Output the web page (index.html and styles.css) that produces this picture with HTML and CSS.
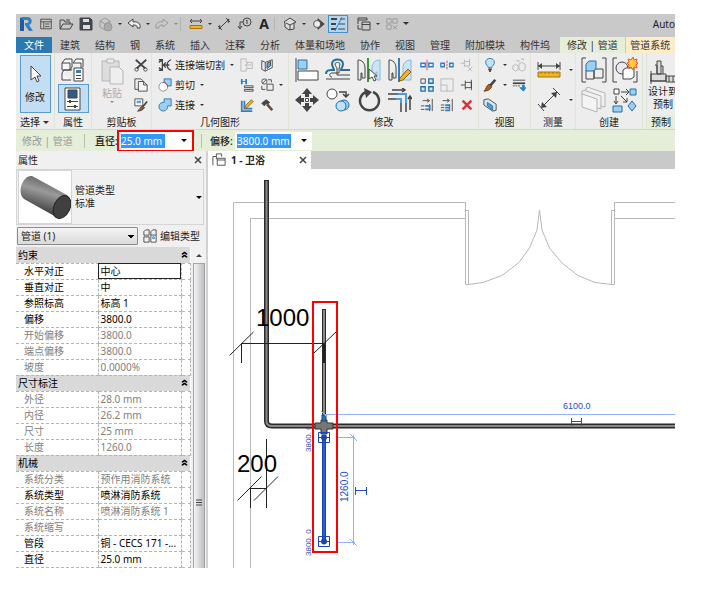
FILE: index.html
```html
<!DOCTYPE html>
<html lang="zh-CN">
<head>
    <meta charset="UTF-8">
    <meta name="viewport" content="width=device-width, initial-scale=1.0">
    <title>Autodesk Revit</title>
    <link rel="stylesheet" href="styles.css">
</head>
<body>

<div class="app">

    <!-- quick access -->
    <header class="titlebar">
        <button class="qa" aria-label="Revit"><svg width="16" height="16" viewBox="0 0 16 16"><path d="M2 2l4-1v14H2z" fill="#1b5d9e" stroke="none"/><path d="M4 1h5c6 0 6 7 2 8l4 6h-4L7 9V7h2c2 0 2-3 0-3H4z" fill="#2f80c4" stroke="none"/></svg></button>
        <button class="qa" aria-label="主视图"><svg width="14" height="14" viewBox="0 0 16 16"><path d="M2 2.500h12v11H2zM2 5.500h12M5.500 6v7M7 8h5M7 11h5"/></svg></button>
        <button class="qa" aria-label="打开"><svg width="16" height="16" viewBox="0 0 16 16"><path d="M2 13V4h4l1 2h5v2M2 13l3-5h10l-3 5zM8 4h4"/></svg></button>
        <button class="qa" aria-label="保存"><svg width="16" height="16" viewBox="0 0 16 16"><path d="M2 2h10l2 2v10H2z" fill="#41474f"/><path d="M5 3h6v3H5zM5 9h7v4H5z" fill="#ddd" stroke="none"/></svg></button>
        <button class="qa" aria-label="同步"><svg class="dim" width="16" height="16" viewBox="0 0 16 16"><path d="M2 5l5-3 5 3v6l-5 3-5-3zM2 5l5 3 5-3M7 8v6" stroke="#999"/><circle cx="10" cy="11" r="4" fill="#aaa" stroke="#999"/></svg></button>
        <span class="arrow"></span>
        <button class="qa" aria-label="撤销"><svg width="16" height="16" viewBox="0 0 16 16"><path d="M2 7l5-4v3c5-1 8 2 7 6h-3c1-2-1-3-4-3v2z" fill="#eee"/></svg></button>
        <span class="arrow"></span>
        <button class="qa" aria-label="重做"><svg class="dim" width="16" height="16" viewBox="0 0 16 16"><path d="M14 7L9 3v3C4 5 1 8 2 12h3c-1-2 1-3 4-3v2z" stroke="#999"/></svg></button>
        <span class="arrow dim"></span>
        <span class="sep"></span>
        <button class="qa" aria-label="测量"><svg width="16" height="16" viewBox="0 0 16 16"><path d="M2 5h12M4 3L2 5l2 2M12 3l2 2-2 2"/><path d="M2 9.500h12v3H2z" fill="#f0b429" stroke="#a87400"/></svg></button>
        <span class="arrow"></span>
        <button class="qa" aria-label="对齐尺寸标注"><svg width="16" height="16" viewBox="0 0 16 16"><path d="M3 13L13 3M2 10l4 4M10 2l4 4M3 13l1-4M13 3l-1 4"/></svg></button>
        <button class="qa" aria-label="按类别标记"><svg width="16" height="16" viewBox="0 0 16 16"><circle cx="11" cy="6" r="4"/><path d="M7 6H4v6M2 10l2 3 2-3M10 5l1-1v4"/></svg></button>
        <button class="qa letter" aria-label="文字">A</button>
        <span class="sep"></span>
        <button class="qa" aria-label="默认三维视图"><svg width="16" height="16" viewBox="0 0 16 16"><path d="M2 6l6-4 6 4-2 1v6l-5 1-4-3V7z" fill="#ddd"/><path d="M4 7l4 2 4-2M8 9v5"/></svg></button>
        <span class="arrow"></span>
        <button class="qa" aria-label="剖面"><svg width="14" height="14" viewBox="0 0 16 16"><path d="M8 2l7 6-7 6z" fill="#444"/><circle cx="7" cy="8" r="4" fill="#eee"/></svg></button>
        <button class="qa on" aria-label="细线"><svg width="16" height="16" viewBox="0 0 16 16"><path d="M1 3h6M1 8h5M1 13h5" stroke-width="2"/><path d="M10 3h5M9 8h6M8 13h7"/><path d="M12 1L5 15" stroke="#2f80c4"/></svg></button>
        <span class="sep"></span>
        <button class="qa" aria-label="切换窗口"><svg width="16" height="16" viewBox="0 0 16 16"><path d="M2 8V2h9v2M2 4h9M6 6h8v8H6zM6 8.500h8M2 9v4h3"/></svg></button>
        <span class="arrow"></span>
        <button class="qa" aria-label="关闭隐藏窗口"><svg class="dim" width="14" height="14" viewBox="0 0 16 16"><path d="M2 2h5v5H2zM9 2h5v5H9zM2 9h5v5H2zM9 10l5 4M14 10l-5 4" stroke="#999"/></svg></button>
        <span class="arrow line"></span>
        <span class="caption">Auto</span>
    </header>

    <nav class="tabs">
        <button class="tab file">文件</button>
        <button class="tab">建筑</button>
        <button class="tab">结构</button>
        <button class="tab">钢</button>
        <button class="tab">系统</button>
        <button class="tab">插入</button>
        <button class="tab">注释</button>
        <button class="tab">分析</button>
        <button class="tab">体量和场地</button>
        <button class="tab">协作</button>
        <button class="tab">视图</button>
        <button class="tab">管理</button>
        <button class="tab">附加模块</button>
        <button class="tab">构件坞</button>
        <button class="tab active">修改 | 管道</button>
        <button class="tab context">管道系统</button>
    </nav>

    <!-- ribbon -->
    <div class="ribbon">
        <section class="panel select">
            <div class="tools">
                <button class="modify"><svg width="16" height="20" viewBox="0 0 16 20"><path d="M4 2v14l4-3 2 5 2-1-2-5h4z" fill="#fff"/></svg>修改</button>
            </div>
            <h2>选择 <span class="arrow"></span></h2>
        </section>

        <section class="panel props">
            <div class="tools big">
                <button aria-label="类型属性"><svg width="26" height="26" viewBox="0 0 26 26"><path d="M2 6l3-4h7v8l-2 3H2zM2 6h8v7M13 6l3-4h7v8M13 6h8v5M2 16l2-3h8M2 16v7h9" fill="#f7f7f7"/><path d="M14 11h9v13h-9z" fill="#fff"/><path d="M16 13h5v3h-5z" fill="#3f7ab0" stroke="none"/><path d="M16 18.500h5M16 21.500h5"/></svg></button>
                <button class="on" aria-label="属性"><svg width="24" height="24" viewBox="0 0 24 24"><path d="M4 1h15v22H4z" fill="#fff"/><path d="M7 3h9v8H7z" fill="#2e5c88"/><path d="M6 14.500h11M6 19.500h11"/><path d="M9 13v3M14 18v3" stroke-width="2"/></svg></button>
            </div>
            <h2>属性</h2>
        </section>

        <section class="panel clip">
            <div class="tools">
                <button class="paste" disabled><svg class="dim" width="24" height="28" viewBox="0 0 24 28"><path d="M2 4h17v20H2z" fill="#ddd"/><path d="M7 2h7v4H7zM10 10h9l4 4v13H10z" fill="#eee"/></svg>粘贴<span class="arrow dim"></span></button>
                <div class="col">
                    <button aria-label="剪切"><svg width="14" height="14" viewBox="0 0 16 16"><path d="M2 2l11 10M14 2L3 12" stroke-width="2"/><circle cx="3" cy="13" r="2"/><circle cx="13" cy="13" r="2"/></svg></button>
                    <button aria-label="复制"><svg width="14" height="14" viewBox="0 0 16 16"><path d="M1 1h7l2 2v10H1z"/><path d="M5 4h6l4 4v7H5zM11 4v4h4" fill="#f5f5f5"/></svg></button>
                    <button aria-label="匹配类型"><svg width="14" height="14" viewBox="0 0 16 16"><path d="M1 1h9v8H1z" fill="#fff"/><path d="M3 3h5v3H3z" fill="#5ba3da" stroke="none"/><path d="M15 4l-5 6" stroke-width="2"/><path d="M10 9l2 2c-2 3-5 4-8 4 2-1 3-5 6-6z" fill="#9a5a26"/></svg></button>
                </div>
            </div>
            <h2>剪贴板</h2>
        </section>

        <section class="panel geometry">
            <div class="tools">
                <div class="col list">
                    <button><svg width="14" height="14" viewBox="0 0 16 16"><path d="M1 2h4v12H1M5 2L1 5M5 14l-4-3M15 2c-6 2-6 10 0 12" stroke-width="1.500"/><path d="M6 8h7M9 5L6 8l3 3" stroke-width="1.500"/></svg>连接端切割<span class="arrow"></span></button>
                    <button><svg width="14" height="14" viewBox="0 0 16 16"><path d="M7 1h8v8H7z" fill="#9bd0f5" stroke="#26709f"/><circle cx="6" cy="10" r="5" fill="#fff" stroke="#888"/><path d="M6 5a5 5 0 0 1 5 5" stroke="#d22"/></svg>剪切<span class="arrow"></span></button>
                    <button><svg width="14" height="14" viewBox="0 0 16 16"><path d="M7 1h8v8h-4a5 5 0 1 1-4-4z" fill="#9bd0f5" stroke="#26709f"/></svg>连接<span class="arrow"></span></button>
                </div>
                <div class="col">
                    <button aria-label="连接屋顶"><svg class="dim" width="14" height="14" viewBox="0 0 16 16"><path d="M1 1h6v4h7v7H7v3H1zM13 8H6M9 6L6 8l3 3"/></svg></button>
                    <button aria-label="梁连接"><svg width="14" height="14" viewBox="0 0 16 16"><path d="M2 1v6M7 1v6" stroke="#2f80c4" stroke-width="2"/><path d="M2 4h5" stroke="#2f80c4"/><path d="M5 9h10v2H5zM5 13h10v2H5z"/></svg></button>
                    <button aria-label="墙连接"><svg width="14" height="14" viewBox="0 0 16 16"><path d="M2 3v12h12M5 3v9h9" stroke="#2f80c4" stroke-width="2"/><path d="M6 9l7-7 2 2-7 7-3 1z" fill="#f0b429" stroke="#8a5a10"/></svg></button>
                </div>
                <div class="col">
                    <button aria-label="拆分面"><svg width="14" height="14" viewBox="0 0 16 16"><path d="M2 3l4 2 8-3v9l-8 4-4-2z" fill="#e8eef4"/><path d="M6 5v10"/><path d="M8 6l4-2v5l-4 3z" fill="#5ba3da"/></svg></button>
                    <button aria-label="取消连接"><svg width="14" height="14" viewBox="0 0 16 16"><circle cx="5" cy="4" r="3"/><path d="M3 6l4-4M8 7h7v7H8zM2 9v4h4M9 2h4v3"/></svg></button>
                    <button aria-label="拆除"><svg width="14" height="14" viewBox="0 0 16 16"><path d="M2 6l5-4 4 3-2 2-2-1-2 3z" fill="#444"/><path d="M8 7l6 7" stroke="#6b4a38" stroke-width="3"/></svg></button>
                </div>
                <span class="arrow"></span>
            </div>
            <h2>几何图形</h2>
        </section>

        <section class="panel edit">
            <div class="tools">
                <div class="large">
                    <button aria-label="对齐"><svg width="24" height="24" viewBox="0 0 24 24"><path d="M1 0v24"/><path d="M3 2h9v9H3z" fill="#9bd0f5" stroke="#26709f"/><path d="M3 13h20v9H3z" fill="#fff"/></svg></button>
                    <button aria-label="偏移"><svg width="26" height="24" viewBox="0 0 26 24"><path d="M1 16c0-5 5-4 8-4 0-2-2-3-2-6 0-6 11-6 11 0 0 3-2 4-2 6h9" stroke="#26709f" stroke-width="2"/><path d="M1 21h24M25 17H12V11c0-2-2-3-2-5 0-2 5-2 5 0 0 2-1 3-1 5v4H7c-3 0-3 4 0 4"/></svg></button>
                    <button aria-label="镜像 - 拾取轴"><svg width="24" height="24" viewBox="0 0 24 24"><path d="M1 2c4 0 7 3 7 8v10H5v-5H4v7H1z" fill="#eee"/><path d="M23 2c-5 0-8 3-8 8v8h4v-4h1v8h3z" fill="#c9e5f8" stroke="#8ab7d6"/><path d="M11 0v24" stroke="#3a9a3a" stroke-width="2"/><path d="M12 11v10l3-2 2 4 2-1-2-4h3z" fill="#fff"/></svg></button>
                    <button aria-label="镜像 - 绘制轴"><svg width="24" height="24" viewBox="0 0 24 24"><path d="M1 2c4 0 7 3 7 8v10H5v-5H4v7H1z" fill="#eee"/><path d="M23 2c-5 0-8 3-8 8v12h8z" fill="#c9e5f8" stroke="#8ab7d6"/><path d="M11 0v24" stroke="#2f80c4" stroke-width="2"/><path d="M12 20l8-9 3 3-8 8-4 1z" fill="#f0b429" stroke="#8a5a10"/></svg></button>
                    <button aria-label="移动"><svg width="24" height="24" viewBox="0 0 24 24"><path d="M12 0l5 6h-3v3h-4V6H7zM12 24l5-6h-3v-3h-4v3H7zM0 12l6-5v3h3v4H6v3zM24 12l-6-5v3h-3v4h3v3z" fill="#444" stroke="none"/><path d="M10.500 10.500h3v3h-3z" fill="#fff"/></svg></button>
                    <button aria-label="复制图元"><svg width="24" height="24" viewBox="0 0 24 24"><circle cx="6" cy="6" r="5" fill="#fff"/><path d="M13 4h7v4M17 6l3 3 3-3" stroke-width="1.500"/><circle cx="18" cy="17" r="5" fill="#9bd0f5" stroke="#26709f"/><circle cx="15" cy="18" r="5" fill="#bfe2fa" stroke="#26709f"/></svg></button>
                    <button aria-label="旋转"><svg width="24" height="24" viewBox="0 0 24 24"><path d="M16 4a9.500 9.500 0 1 1-7 0" stroke-width="2.500"/><path d="M7 0l8 4-6 6z" fill="#444" stroke="none"/></svg></button>
                    <button aria-label="修剪/延伸为角"><svg width="24" height="24" viewBox="0 0 24 24"><path d="M4 2h13M14 0l3 2-3 2M22 22V9M20 11l2-3 2 3M0 6h10M0 11h8M13 15v9M18 15v9" stroke-width="1.500"/><path d="M10 6h8v9M8 11h5v4" stroke="#4a9fe0" stroke-width="2"/></svg></button>
                </div>
                <div class="small">
                    <button aria-label="拆分图元"><svg width="14" height="14" viewBox="0 0 16 16"><path d="M1 6h5v4H1zM10 6h5v4h-5z" stroke="#2f80c4" stroke-width="1.500"/><path d="M8 2v12" stroke="#d33"/></svg></button>
                    <button aria-label="用间隙拆分"><svg width="14" height="14" viewBox="0 0 16 16"><path d="M1 6h4v4H1zM11 6h4v4h-4z" stroke="#2f80c4" stroke-width="1.500"/><path d="M8 3v3M8 7v2M8 10v3" stroke="#d33"/></svg></button>
                    <button aria-label="解锁"><svg class="dim" width="14" height="14" viewBox="0 0 16 16"><path d="M1 6h4M5 2v8M5 4h6v5H5M11 1v7M9 10l5 5M14 10l-5 5"/></svg></button>
                    <button aria-label="阵列"><svg width="14" height="14" viewBox="0 0 16 16"><path d="M1 1h5v5H1z"/><path d="M10 1h5v5h-5zM1 10h5v5H1zM10 10h5v5h-5z" fill="#c9e5f8" stroke="#26709f" stroke-width="1.500"/></svg></button>
                    <button aria-label="缩放"><svg class="dim" width="14" height="14" viewBox="0 0 16 16"><path d="M1 1h14v14H1zM1 8h7v7"/></svg></button>
                    <button aria-label="锁定"><svg width="14" height="14" viewBox="0 0 16 16"><path d="M1 8h5M6 3v10M6 5h7v6H6M13 2v12"/></svg></button>
                    <button aria-label="修剪/延伸单个图元"><svg width="14" height="14" viewBox="0 0 16 16"><path d="M3 3h7M8 1l3 2-3 2M14 1v14M11 7v8M1 9h4M1 13h4"/><path d="M6 9h5v4H6" stroke="#2f80c4" stroke-width="2"/></svg></button>
                    <button aria-label="修剪/延伸多个图元"><svg width="14" height="14" viewBox="0 0 16 16"><path d="M3 3h7M8 1l3 2-3 2M14 1v14M11 7v8M1 8h4M1 11h4M1 14h4"/><path d="M6 8h5M6 11h5M6 14h5" stroke="#2f80c4" stroke-width="2"/></svg></button>
                    <button aria-label="删除"><svg width="14" height="14" viewBox="0 0 16 16"><path d="M3 3l10 10M13 3L3 13" stroke="#d8363c" stroke-width="3"/></svg></button>
                </div>
            </div>
            <h2>修改</h2>
        </section>

        <section class="panel view">
            <div class="tools">
                <div class="col">
                    <button aria-label="隐藏"><svg width="14" height="14" viewBox="0 0 16 16"><path d="M6 11c0-2-3-3-3-6 0-6 10-6 10 0 0 3-3 4-3 6z" fill="#bfe2fa" stroke="#26709f"/><path d="M6 13h4M7 15h2" stroke-width="2"/></svg></button>
                    <button aria-label="替换图形"><svg width="14" height="14" viewBox="0 0 16 16"><path d="M14 2L8 9" stroke-width="3"/><path d="M7 7l3 3c-2 4-6 5-9 5 3-2 2-6 6-8z" fill="#a85f28" stroke="#6b3610"/></svg></button>
                    <button aria-label="选择框"><svg width="14" height="14" viewBox="0 0 16 16"><path d="M1 2l5-1 9 6v7l-4 1-10-7z" fill="#d8e6f0"/><path d="M5 5l6 4v5L5 9z" fill="#4a9fe0" stroke="#26709f"/></svg></button>
                </div>
                <div class="col arrows"><span class="arrow"></span><span class="arrow"></span></div>
                <div class="col">
                    <button aria-label="置换图元"><svg class="dim" width="14" height="14" viewBox="0 0 16 16"><path d="M1 9l3-2 3 2v4l-3 2-3-2zM8 7l3-2 4 2v6l-4 2-3-2zM5 3h3v2M10 1h3v2"/></svg></button>
                    <button aria-label="线处理"><svg width="14" height="14" viewBox="0 0 16 16"><path d="M1 2.500h14"/><path d="M1 6h14" stroke-width="2"/><path d="M1 9h8" stroke-dasharray="2 1"/><path d="M12 8v3H9l4 4 3-4h-2V8z" fill="#2f80c4" stroke="#2f80c4"/></svg></button>
                </div>
            </div>
            <h2>视图</h2>
        </section>

        <section class="panel measure">
            <div class="tools">
                <div class="col two">
                    <button aria-label="测量距离"><svg width="24" height="24" viewBox="0 0 24 24"><path d="M1 4v8M23 4v8M1 8h22"/><path d="M1 8l4-3v6zM23 8l-4-3v6z" fill="#444" stroke="none"/><path d="M1 14h22v5H1z" fill="#f0b429" stroke="#a87400"/><path d="M4 14v2M8 14v2M12 14v2M16 14v2M20 14v2" stroke="#a87400"/></svg></button>
                    <button aria-label="尺寸标注"><svg width="24" height="24" viewBox="0 0 24 24"><path d="M4 20L20 4M1 16l6 7M16 0l7 7"/><path d="M4 20l1-6 5 5zM20 4l-1 6-5-5z" fill="#444" stroke="none"/></svg></button>
                </div>
                <div class="col two arrows"><span class="arrow"></span><span class="arrow"></span></div>
            </div>
            <h2>测量</h2>
        </section>

        <section class="panel create">
            <div class="tools">
                <div class="large">
                    <button aria-label="创建组"><svg width="26" height="26" viewBox="0 0 26 26"><path d="M5 1H1v24h4M21 1h4v24h-4"/><path d="M13 12h9v9h-9zM5 13h8v9H5z" fill="#eee"/><path d="M5 7l3-3h7v8l-3 2H5z" fill="#9bd0f5" stroke="#26709f"/></svg></button>
                    <button aria-label="创建部件"><svg width="26" height="26" viewBox="0 0 26 26"><path d="M5 1H1v24h4M25 14v11h-4"/><circle cx="10" cy="11" r="6" fill="#e6e9ee"/><path d="M11 13l3-2h8v9l-3 2h-8z" fill="#fff"/><path d="M21 0l1 3 3-1-1 3 2 1-2 2 1 3-3-1-1 3-2-3-3 1 1-3-2-2 2-1-1-3 3 1z" fill="#fc4" stroke="#e8601c"/></svg></button>
                    <button aria-label="创建零件"><svg class="dim" width="26" height="26" viewBox="0 0 26 26"><path d="M9 1l15 5v14l-4-1" fill="#f0f0f0"/><path d="M5 4l15 5v13l-4-1" fill="#f0f0f0"/><path d="M1 7l15 5v13L1 20z" fill="#f4f4f4"/><path d="M1 7V4l4-1V4M5 3V1l4-1v1"/></svg></button>
                    <button aria-label="创建类似"><svg width="26" height="26" viewBox="0 0 26 26"><path d="M2 2h5v5H2z" fill="#fff"/><path d="M18 2h6v6h-6zM1 19h9v6H1zM20 14l4 5-4 5-4-5z" fill="#9bd0f5" stroke="#26709f"/><path d="M9 5h7M14 2l3 3-3 3M4 9v7M2 14l2 3 2-3M9 9l6 6M15 11v4h-4"/></svg></button>
                </div>
            </div>
            <h2>创建</h2>
        </section>

        <section class="panel fab">
            <div class="tools">
                <button class="design"><svg width="28" height="26" viewBox="0 0 28 26"><path d="M8 2h4v13H8zM2 15h15v7H2zM17 17h11v6H17zM6 6h2v9M12 7h2v8M1 22h16M2 12v13M20 17v6M24 17v6" fill="#ddd"/></svg>设计到<br>预制</button>
            </div>
            <h2>预制</h2>
        </section>
    </div>

    <!-- options bar -->
    <div class="options">
        <span class="mode">修改 | 管道</span>
        <label for="diameter">直径:</label>
        <div class="combo marked">
            <input class="picked" type="text" id="diameter" value="25.0 mm">
            <button aria-label="展开直径"><span class="arrow"></span></button>
        </div>
        <label class="offset" for="offset">偏移:</label>
        <div class="combo">
            <input class="picked wide" type="text" id="offset" value="3800.0 mm">
            <button aria-label="展开偏移"><span class="arrow"></span></button>
        </div>
    </div>

    <main class="work">
        <aside class="palette">
            <div class="palette-head">属性<button aria-label="关闭属性"><svg width="8" height="8" viewBox="0 0 8 8"><path d="M1 1l6 6M7 1L1 7" stroke-width="1.500"/></svg></button></div>

            <button class="type">
                <span class="thumb"><svg width="52" height="52" viewBox="0 0 52 52">
                    <defs><linearGradient id="steel" x1="0.600" y1="0.100" x2="0.350" y2="0.800"><stop offset="0" stop-color="#666"/><stop offset="0.400" stop-color="#9a9a9a"/><stop offset="1" stop-color="#444"/></linearGradient></defs>
                    <path d="M13 5L48 24c8 8-3 24-9 23L5 28C-3 21 4 4 13 5z" fill="url(#steel)" stroke="none"/>
                    <ellipse cx="43" cy="36" rx="8" ry="12" transform="rotate(25 43 36)" fill="#404040" stroke="#222"/>
                </svg></span>
                <span class="type-name">管道类型<br>标准</span>
                <span class="arrow"></span>
            </button>

            <div class="filter">
                <select aria-label="图元过滤">
                    <option>管道 (1)</option>
                </select>
                <button><svg width="14" height="14" viewBox="0 0 16 16"><path d="M1 3l2-2h4v6H1zM9 3l2-2h4v6M9 7V3M1 9h6v6H1z"/><path d="M9 7h6v8H9z" fill="#fff"/><path d="M11 9h2v2h-2z" stroke="#2f80c4"/></svg>编辑类型</button>
            </div>

            <div class="grid">
                <table>
                    <colgroup><col class="name"><col class="value"><col class="link"></colgroup>
                    <tbody>
                        <tr class="group"><th colspan="2">约束</th><th>«</th></tr>
                        <tr><td>水平对正</td><td class="focus">中心</td><td></td></tr>
                        <tr><td>垂直对正</td><td>中</td><td></td></tr>
                        <tr><td>参照标高</td><td>标高 1</td><td></td></tr>
                        <tr><td>偏移</td><td>3800.0</td><td></td></tr>
                        <tr class="ro"><td>开始偏移</td><td>3800.0</td><td></td></tr>
                        <tr class="ro"><td>端点偏移</td><td>3800.0</td><td></td></tr>
                        <tr class="ro"><td>坡度</td><td>0.0000%</td><td></td></tr>
                        <tr class="group"><th colspan="2">尺寸标注</th><th>«</th></tr>
                        <tr class="ro"><td>外径</td><td>28.0 mm</td><td></td></tr>
                        <tr class="ro"><td>内径</td><td>26.2 mm</td><td></td></tr>
                        <tr class="ro"><td>尺寸</td><td>25 mm</td><td></td></tr>
                        <tr class="ro"><td>长度</td><td>1260.0</td><td></td></tr>
                        <tr class="group"><th colspan="2">机械</th><th>«</th></tr>
                        <tr class="ro"><td>系统分类</td><td>预作用消防系统</td><td></td></tr>
                        <tr><td>系统类型</td><td>喷淋消防系统</td><td></td></tr>
                        <tr class="ro"><td>系统名称</td><td>喷淋消防系统 1</td><td></td></tr>
                        <tr class="ro"><td>系统缩写</td><td></td><td></td></tr>
                        <tr><td>管段</td><td>铜 - CECS 171 -...</td><td></td></tr>
                        <tr><td>直径</td><td>25.0 mm</td><td></td></tr>
                    </tbody>
                </table>
                <div class="scroll">
                    <span class="arrow up"></span>
                    <div class="handle"><svg width="6" height="7" viewBox="0 0 6 7"><path d="M0 1h6M0 3.500h6M0 6h6"/></svg></div>
                </div>
            </div>
        </aside>

        <section class="view-area">
            <div class="view-tabs">
                <div class="view-tab">
                    <svg width="14" height="14" viewBox="0 0 16 16"><path d="M1 14V4h4V1h6v3M5 4v3"/><path d="M6 6h9v8H6zM6 8h9" fill="#fff"/></svg>
                    <b>1 - 卫浴</b>
                    <button aria-label="关闭视图"><svg width="8" height="8" viewBox="0 0 8 8"><path d="M1 1l6 6M7 1L1 7" stroke-width="1.500"/></svg></button>
                </div>
            </div>

            <svg class="plan">
                <!-- walls and double door -->
                <g stroke="#b8b8b8">
                    <path d="M25.500 1200V33.500H257.500V115.500M42.500 1200V49.500H257.500M1600 33.500H406.500V115.500M1600 49.500H406.500"/>
                    <path d="M257.500 41.500h3v74h-3M406.500 41.500h-3v74h3"/>
                    <path d="M260.500 115.500L275 113.500 294 106.500 311 93.500 321.500 79 329 61 331.500 41 334 61 341.500 79 354 94 370 106.500 387 113.500 403.500 115.500"/>
                </g>

                <text class="elev" transform="translate(103 283) rotate(-90)">3800. 0</text>
                <text class="elev" transform="translate(103 387) rotate(-90)">3800. 0</text>

                <!-- pipes -->
                <g stroke="#2b2b2b" stroke-width="5">
                    <path d="M58.500 11V252Q58.500 257 64 257H1600"/>
                    <path d="M116 140V257" stroke-width="4"/>
                </g>
                <g stroke="#8a8a8a" stroke-width="2">
                    <path d="M58.500 12V252Q58.500 257 64 257H1600"/>
                    <path d="M116 141V257"/>
                </g>
                <path d="M113 251h6v3h6v6h-6v5h-6v-5h-6v-6h6z" fill="#777" stroke="#333"/>
                <path d="M114 246h4v6h-4z" fill="#2c6fb0" stroke="#174a80"/>

                <!-- dimensions -->
                <g stroke="#222">
                    <path d="M33 174.500h83M33.500 174v20M21.500 186.500l24-23.500M106 184l22-21"/>
                    <path d="M116 174v20" stroke-width="2"/>
                    <path d="M58.500 270v69M42.500 319v20M42 319.500h16M29.500 331.500l24-24M46 331.500l24-24"/>
                </g>
                <text class="dim-text" x="48" y="157">1000</text>
                <text class="dim-text" x="29" y="303">200</text>

                <g stroke="#8fb4f5">
                    <path d="M116 245.500H1600M128 268.500h19M128 373.500h19M145.500 266v110M142 265l7 7M142 370l7 7M113 242l6 6"/>
                </g>
                <g stroke="#1f4fbf">
                    <path d="M363.500 249v8M373.500 249v8M364 252.500h9M147.500 318v8M158.500 318v8M148 321.500h10"/>
                </g>
                <text class="temp" x="355" y="240">6100.0</text>
                <text class="temp large" transform="translate(140 333) rotate(-90)">1260.0</text>

                <!-- selected pipe -->
                <path d="M116 269v104" stroke="#1746b4" stroke-width="4"/>
                <path d="M116 269v104" stroke="#3f74e6"/>
                <path d="M110.500 263.500h11v10h-11zM110.500 367.500h11v10h-11zM111 268.500h10M111 372.500h10" stroke="#1746b4"/>
                <circle cx="116" cy="268.500" r="3" fill="#1746b4" stroke="none"/>
                <circle cx="116" cy="372.500" r="3" fill="#1746b4" stroke="none"/>
                <rect x="105" y="133" width="24" height="250" stroke="#f00" stroke-width="2"/>
            </svg>
        </section>
    </main>
</div>

</body>
</html>
```
FILE: styles.css
```css
* {
    box-sizing: border-box;
}
body {
    margin: 0;
    padding: 14px 27px 26px 16px;
    background: #fff;
    color: #222;
    font-family: "Noto Sans", "Noto Sans CJK SC", sans-serif;
    font-size: 10px;
    line-height: 14px;
}
button {
    display: flex;
    align-items: center;
    justify-content: center;
    margin: 0;
    padding: 0;
    border: 0;
    background: none;
    color: inherit;
    font: inherit;
    white-space: nowrap;
    cursor: pointer;
}
svg {
    display: block;
    flex: none;
    fill: none;
    stroke: #444;
}
svg.dim {
    stroke: #b5b5b5;
}
.app {
    overflow: hidden;
}
.arrow {
    flex: none;
    width: 8px;
    display: flex;
    justify-content: center;
}
.arrow::before {
    content: "";
    border: 2px solid transparent;
    border-top-color: #333;
    border-bottom: 0;
}
.arrow.dim::before {
    border-top-color: #888;
}

/* title bar */
.titlebar {
    display: flex;
    align-items: center;
    height: 23px;
    padding-bottom: 4px;
    background: #c9c9c9;
}
.qa {
    width: 20px;
    height: 18px;
}
.qa.on {
    border: 1px solid #4a90c8;
    background: #b5d5ee;
}
.qa.letter {
    font: bold 14px "Open Sans", sans-serif;
}
.arrow.line::before {
    border-width: 3px;
    border-bottom: 0;
}
.sep {
    width: 6px;
    height: 14px;
    border-left: 1px solid #b5b5b5;
}
.caption {
    margin-left: auto;
    line-height: 16px;
}

/* tabs */
.tabs {
    display: flex;
    gap: 1px;
    height: 16px;
    background: #c9c9c9;
}
.tab {
    flex: none;
    padding: 0 7px;
    color: #333;
}
.tab.file {
    width: 36px;
    background: #2a79b0;
    color: #fff;
}
.tab.active {
    margin-left: 2px;
    background: #e4eed8;
}
.tab.context {
    flex: 1;
    padding: 0;
    background: #fdecc8;
}

/* ribbon */
.ribbon {
    display: flex;
    height: 77px;
    background: #ededed;
    border-bottom: 1px solid #cfd6c8;
}
.panel {
    flex: none;
    display: flex;
    flex-direction: column;
    border-right: 1px solid #dfe6d8;
}
.panel h2 {
    display: flex;
    align-items: center;
    justify-content: center;
    gap: 2px;
    margin: 0;
    font-size: 10px;
    font-weight: normal;
    line-height: 14px;
}
.tools {
    display: flex;
    height: 62px;
    padding-top: 2px;
}
.panel.select { width: 39px; }
.panel.props { width: 37px; }
.panel.clip { width: 60px; }
.panel.geometry { width: 137px; }
.panel.edit { width: 190px; }
.panel.view { width: 52px; }
.panel.measure { width: 45px; }
.panel.create { width: 67px; }
.panel.select h2 .arrow::before {
    border-width: 3px;
    border-bottom: 0;
}
.modify {
    flex-direction: column;
    gap: 6px;
    width: 31px;
    height: 58px;
    margin: 0 auto;
    border: 1px solid #5b9bd0;
    background: #c3def2;
}
.tools.big {
    flex-direction: column;
    align-items: center;
}
.tools.big button {
    width: 31px;
    height: 29px;
}
.tools.big .on {
    border: 1px solid #5b9bd0;
    background: #c3def2;
}
.paste {
    flex-direction: column;
    justify-content: flex-start;
    width: 40px;
    padding-top: 2px;
    gap: 1px;
    color: #aaa;
}
.col {
    display: grid;
    grid-template-rows: 20px 20px 20px;
    width: 20px;
}
.col.two {
    grid-template-rows: 30px 30px;
    width: 36px;
}
.col.arrows,
.col.two.arrows {
    width: 8px;
    align-items: center;
}
.clip .col {
    width: 18px;
}
.col.list {
    width: 85px;
    padding-left: 6px;
}
.list button {
    justify-content: flex-start;
    gap: 3px;
}
.geometry .tools > .arrow {
    align-items: center;
}
.large {
    display: grid;
    grid-template-columns: repeat(4, 31px);
    grid-template-rows: 30px 30px;
    padding-left: 2px;
}
.create .large {
    grid-template-columns: 31px 31px;
}
.small {
    display: grid;
    grid-template-columns: repeat(3, 20px);
    grid-template-rows: 20px 20px 20px;
    padding-left: 2px;
}
.view .col {
    width: 22px;
}
.view .col.arrows {
    width: 8px;
}
.panel.fab {
    flex: 1;
    min-width: 0;
    margin-left: 3px;
    border-left: 1px solid #dfe6d8;
    border-right: 0;
    overflow: hidden;
}
.panel.fab h2 {
    background: #e4eed8;
}
.design {
    flex-direction: column;
    flex: none;
    width: 32px;
    line-height: 13px;
}

/* options bar */
.options {
    display: flex;
    align-items: center;
    height: 21px;
    background: #e4eed8;
}
.mode {
    width: 69px;
    padding-left: 6px;
    border-right: 1px solid #b9c2b0;
    color: #999;
}
.options label {
    padding-left: 10px;
    width: 32px;
    white-space: nowrap;
    font-weight: 500;
}
.options .offset {
    margin-left: 7px;
    padding-left: 8px;
    width: 34px;
    border-left: 1px solid #b9c2b0;
}
.combo {
    display: flex;
    justify-content: space-between;
    align-items: center;
    width: 77px;
    height: 18px;
    padding: 0 4px 0 2px;
    background: #fff;
}
.combo.marked {
    height: 22px;
    border: 2px solid #f00;
}
.picked {
    width: 44px;
    height: 14px;
    padding: 0;
    border: 0;
    background: #3399ff;
    color: #fff;
    font: inherit;
}
.picked.wide {
    width: 54px;
}
.combo .arrow::before,
.type .arrow::before {
    border-width: 3px;
    border-bottom: 0;
    border-top-color: #000;
}

/* properties palette */
.work {
    display: flex;
}
.palette {
    flex: none;
    width: 192px;
    border-right: 2px solid #d2d2d2;
    background: #f0f0f0;
}
.palette-head {
    display: flex;
    justify-content: space-between;
    align-items: center;
    height: 18px;
    padding: 0 4px 0 2px;
}
.type {
    width: 188px;
    height: 56px;
    padding: 1px 0 1px 1px;
    border: 1px solid #d5d5d5;
}
.thumb {
    border: 1px solid #d5d5d5;
    background: #fff;
}
.type-name {
    flex: 1;
    padding-left: 3px;
    text-align: left;
    line-height: 13px;
}
.filter {
    display: flex;
    align-items: center;
    gap: 5px;
    height: 22px;
    padding-left: 1px;
}
.filter select {
    appearance: none;
    width: 121px;
    height: 18px;
    padding: 0 3px;
    border: 1px solid #8c8c8c;
    border-radius: 1px;
    background:
        linear-gradient(to bottom left, #000 50%, transparent 51%) right 6px center / 3px 3px no-repeat,
        linear-gradient(to bottom right, #000 50%, transparent 51%) right 3px center / 3px 3px no-repeat,
        linear-gradient(#f4f4f4, #dadada);
    color: inherit;
    font: inherit;
}
.filter button {
    gap: 3px;
}
.grid {
    display: flex;
    gap: 2px;
}
table {
    table-layout: fixed;
    width: 174px;
    border-collapse: collapse;
    background: #fff;
    color: #000;
}
col.name { width: 82px; }
col.value { width: 83px; }
col.link { width: 9px; }
tr {
    height: 16px;
}
td, th {
    padding: 0 0 0 2px;
    border: 1px dashed #b5b5b5;
    border-left: 0;
    text-align: left;
    font-weight: normal;
    line-height: 14px;
    white-space: nowrap;
}
td:first-child {
    padding-left: 8px;
}
td.focus {
    outline: 1px solid #222;
    outline-offset: -1px;
}
.ro {
    color: #808080;
}
.group th {
    border: 0;
    background: #d9d9d9;
}
.group th:last-child {
    padding: 0;
    writing-mode: vertical-rl;
    text-align: center;
    font-size: 12px;
    font-weight: bold;
    line-height: 9px;
}
.scroll {
    display: flex;
    flex-direction: column;
    align-items: center;
    width: 12px;
    background: #f2f2f2;
}
.scroll .arrow {
    height: 16px;
    align-items: center;
}
.arrow.up::before {
    border: 3px solid transparent;
    border-top: 0;
    border-bottom-color: #444;
}
.handle {
    flex: 1;
    display: flex;
    flex-direction: column;
    justify-content: flex-end;
    align-items: center;
    width: 12px;
    padding-bottom: 62px;
    border: 1px solid #a5a5a5;
    border-bottom: 0;
    background: linear-gradient(to right, #f4f4f4, #bdbdc2);
}

/* drawing area */
.view-area {
    flex: 1;
    min-width: 0;
    display: flex;
    flex-direction: column;
}
.view-tabs {
    display: flex;
    height: 18px;
    background: #c9c9c9;
}
.view-tab {
    display: flex;
    align-items: center;
    gap: 5px;
    width: 103px;
    padding: 0 4px;
    background: #fff;
}
.view-tab button {
    margin-left: auto;
}
.plan {
    flex: 1;
    width: 100%;
}
.plan text {
    stroke: none;
    fill: #1f4fbf;
    font-family: "Liberation Sans", Arial, sans-serif;
}
.plan .temp {
    font-size: 9px;
}
.plan .temp.large {
    font-size: 10px;
}
.plan .elev {
    font-size: 8px;
}
.plan .dim-text {
    fill: #000;
    font-size: 24px;
}
```
